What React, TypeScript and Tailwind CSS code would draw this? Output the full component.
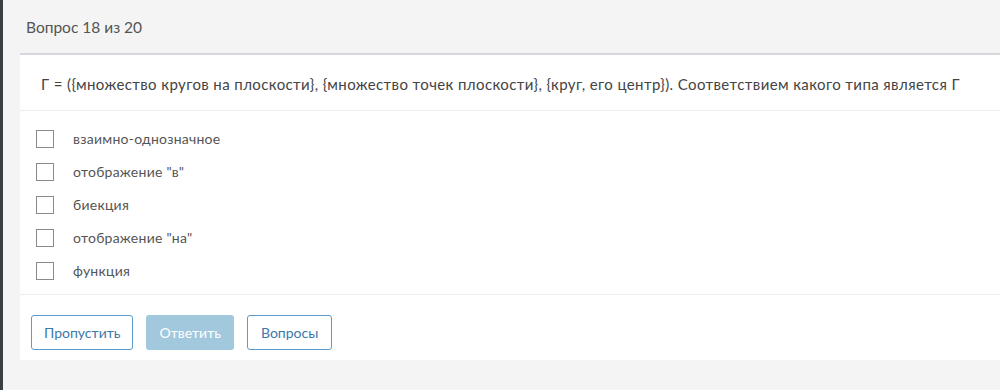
const options = [
  "взаимно-однозначное",
  'отображение "в"',
  "биекция",
  'отображение "на"',
  "функция",
];

export default function App() {
  return (
    <div
      className="h-[390px] w-[1000px] overflow-hidden flex bg-[#f4f4f4] text-[#555]"
      style={{ fontFamily: "Lato, 'Open Sans', sans-serif" }}
    >
      <div className="w-[3px] bg-[#3a3f44]" />
      <div className="flex-1 flex flex-col pl-[17px]">
        <div className="h-[53px] pl-[6px] pt-[17px] text-[15.5px] text-[#555] leading-5">Вопрос 18 из 20</div>
        <div className="bg-white border-t-2 border-[#d5d8de]">
          <div className="h-[56px] flex items-center pt-[3px] pl-[21px] text-[15px] tracking-[0.4px] text-[#444] border-b border-[#eeeeee]">
            Г = ({"{"}множество кругов на плоскости{"}"}, {"{"}множество точек плоскости{"}"}, {"{"}круг, его центр{"}"}). Соответствием какого типа является Г
          </div>
          <div className="pt-[11px] pb-[7px] flex flex-col border-b border-[#eeeeee]">
            {options.map((o) => (
              <label key={o} className="h-[33px] flex items-center pl-[16px]">
                <span className="w-[18px] h-[18px] border border-[#8a8a8a] bg-white" />
                <span className="ml-[19px] text-[14px] tracking-[0.25px] text-[#555]">{o}</span>
              </label>
            ))}
          </div>
          <div className="h-[65px] flex items-start pt-[20px] pl-[11px] gap-[13px] text-[14px]">
            <button className="h-[35px] px-[12px] rounded-[3px] border border-[#5c9ccc] text-[#3c78aa] bg-white">
              Пропустить
            </button>
            <button className="h-[35px] px-[13px] rounded-[3px] bg-[#a2c8de] text-white">
              Ответить
            </button>
            <button className="h-[35px] px-[13px] rounded-[3px] border border-[#5c9ccc] text-[#3c78aa] bg-white">
              Вопросы
            </button>
          </div>
        </div>
      </div>
    </div>
  );
}
